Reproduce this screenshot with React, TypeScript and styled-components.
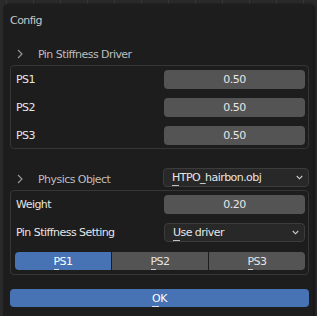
import React from "react";
import styled, { createGlobalStyle } from "styled-components";

const Global = createGlobalStyle`
  html, body { margin: 0; padding: 0; }
  body {
    width: 317px;
    height: 316px;
    overflow: hidden;
    background-color: #2a2a2a;
    background-image:
      linear-gradient(90deg, rgba(255,255,255,0.06) 1px, transparent 1px);
    background-size: 27px 100%;
    background-position: 6px 0;
    font-family: "DejaVu Sans", "Liberation Sans", sans-serif;
    font-size: 11px;
    letter-spacing: -0.55px;
    color: #e6e6e6;
  }
`;

const Dialog = styled.div`
  margin: 4px 0 0 3px;
  width: 310px;
  height: 320px;
  box-sizing: border-box;
  background: #1d1d1d;
  border-radius: 5px 5px 0 0;
  box-shadow: 2px 0 3px rgba(0,0,0,0.5);
  padding: 0 4px 0 7px;
  display: flex;
  flex-direction: column;
`;

const Title = styled.div`
  height: 33px;
  display: flex;
  align-items: center;
  color: #c8c8c8;
`;

const Header = styled.div<{ $h: number }>`
  height: ${(p) => p.$h}px;
  display: flex;
  align-items: center;
  color: #bdbdbd;
`;

const Chevron = styled.svg`
  width: 8px;
  height: 10px;
  margin: 2px 14px 0 6px;
  flex: none;
`;

const HeaderLabel = styled.span`
  flex: 1;
  padding-top: 3px;
`;

const Box = styled.div<{ $pb: number }>`
  border: 1px solid #363636;
  border-radius: 4px;
  padding: 3px 3px ${(p) => p.$pb}px 4px;
  display: flex;
  flex-direction: column;
  gap: 8px;
`;

const Row = styled.div`
  height: 20px;
  display: flex;
  align-items: center;
`;

const Label = styled.span`
  flex: 1;
  padding-left: 1px;
  color: #e6e6e6;
`;

const Field = styled.div<{ $w: number }>`
  width: ${(p) => p.$w}px;
  height: 19px;
  box-sizing: border-box;
  background: #545454;
  border-radius: 4px;
  display: flex;
  align-items: center;
  justify-content: center;
  color: #e6e6e6;
`;

const Dropdown = styled.div<{ $w: number }>`
  width: ${(p) => p.$w}px;
  height: 19px;
  box-sizing: border-box;
  background: #282828;
  border: 1px solid #3c3c3c;
  border-radius: 4px;
  display: flex;
  align-items: center;
  padding: 0 5px 0 8px;
  color: #e6e6e6;
`;

const DropText = styled.span`
  flex: 1;
`;

const Caret = styled.svg`
  width: 7px;
  height: 5px;
  flex: none;
`;

const Accel = styled.span`
  position: relative;
  &::after {
    content: "";
    position: absolute;
    left: 0;
    right: 1px;
    bottom: -2px;
    height: 1px;
    background: currentColor;
    opacity: 0.8;
  }
`;

const Tabs = styled.div`
  height: 18px;
  display: flex;
  gap: 1px;
  margin-top: 2px;
`;

const Tab = styled.div<{ $active?: boolean }>`
  flex: 1;
  display: flex;
  align-items: center;
  justify-content: center;
  background: ${(p) => (p.$active ? "#4772b3" : "#545454")};
  color: ${(p) => (p.$active ? "#ffffff" : "#e6e6e6")};
  &:first-child { border-radius: 4px 0 0 4px; }
  &:last-child { border-radius: 0 4px 4px 0; }
`;

const OkButton = styled.div`
  margin-top: 14px;
  height: 18px;
  width: 299px;
  background: #4772b3;
  border-radius: 4px;
  display: flex;
  align-items: center;
  justify-content: center;
  color: #ffffff;
`;

const Spacer = styled.div<{ $h: number }>`
  height: ${(p) => p.$h}px;
  flex: none;
`;

const ChevronIcon = () => (
  <Chevron viewBox="0 0 8 10">
    <path d="M2 1 L6 5 L2 9" fill="none" stroke="#9a9a9a" strokeWidth="1.1" />
  </Chevron>
);

const CaretIcon = () => (
  <Caret viewBox="0 0 7 5">
    <path d="M0.8 1 L3.5 3.8 L6.2 1" fill="none" stroke="#d0d0d0" strokeWidth="1.1" />
  </Caret>
);

const withAccel = (text: string) => (
  <>
    <Accel>{text[0]}</Accel>
    {text.slice(1)}
  </>
);

export default function App() {
  return (
    <>
      <Global />
      <Dialog>
        <Title>Config</Title>
        <Spacer $h={3} />
        <Header $h={25}>
          <ChevronIcon />
          <HeaderLabel>Pin Stiffness Driver</HeaderLabel>
        </Header>
        <Box $pb={3}>
          {["PS1", "PS2", "PS3"].map((n) => (
            <Row key={n}>
              <Label>{n}</Label>
              <Field $w={141}>0.50</Field>
            </Row>
          ))}
        </Box>
        <Spacer $h={19} />
        <Header $h={19}>
          <ChevronIcon />
          <HeaderLabel>Physics Object</HeaderLabel>
          <Dropdown $w={146}>
            <DropText>{withAccel("HTPO_hairbon.obj")}</DropText>
            <CaretIcon />
          </Dropdown>
        </Header>
        <Spacer $h={3} />
        <Box $pb={4}>
          <Row>
            <Label>Weight</Label>
            <Field $w={141}>0.20</Field>
          </Row>
          <Row>
            <Label>Pin Stiffness Setting</Label>
            <Dropdown $w={141}>
              <DropText>{withAccel("Use driver")}</DropText>
              <CaretIcon />
            </Dropdown>
          </Row>
          <Tabs>
            <Tab $active>{withAccel("PS1")}</Tab>
            <Tab>{withAccel("PS2")}</Tab>
            <Tab>{withAccel("PS3")}</Tab>
          </Tabs>
        </Box>
        <OkButton>{withAccel("OK")}</OkButton>
      </Dialog>
    </>
  );
}
